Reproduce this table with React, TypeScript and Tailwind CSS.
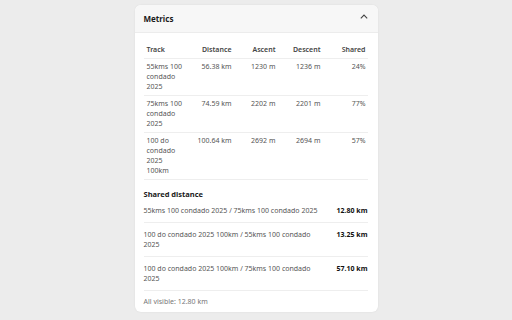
import React from "react";

const tracks = [
  { name: "55kms 100 condado 2025", dist: "56.38 km", asc: "1230 m", desc: "1236 m", shared: "24%" },
  { name: "75kms 100 condado 2025", dist: "74.59 km", asc: "2202 m", desc: "2201 m", shared: "77%" },
  { name: "100 do condado 2025 100km", dist: "100.64 km", asc: "2692 m", desc: "2694 m", shared: "57%" },
];

const pairs = [
  { label: "55kms 100 condado 2025 / 75kms 100 condado 2025", value: "12.80 km" },
  { label: "100 do condado 2025 100km / 55kms 100 condado 2025", value: "13.25 km" },
  { label: "100 do condado 2025 100km / 75kms 100 condado 2025", value: "57.10 km" },
];

const cols = "grid grid-cols-[47px_43px_44px_45px_45px]";

export default function App() {
  return (
    <div
      className="w-[512px] h-[320px] overflow-hidden bg-[#ececec] flex flex-col items-center pt-[5px]"
      style={{ fontFamily: '"Noto Sans", "Open Sans", sans-serif' }}
    >
      <div className="w-[243px] bg-white rounded-[6px] shadow-[0_0_2px_rgba(0,0,0,0.08)] overflow-hidden flex flex-col">
        <div className="h-[28px] shrink-0 bg-[#f7f7f7] border-b border-[#ececec] flex items-center justify-between pl-[9px] pr-[10px]">
          <span className="text-[8px] font-bold text-[#1a1a1a]">Metrics</span>
          <svg width="8" height="5" viewBox="0 0 8 5" className="-mt-[4px]">
            <path d="M0.8 4.3 L4 1.1 L7.2 4.3" fill="none" stroke="#444" strokeWidth="1.1" />
          </svg>
        </div>
        <div className="pl-[9px] pr-[10px] pt-[8px] pb-[5px] text-[7px] leading-[10px]">
          <div className={`${cols} border-b border-[#eeeeee] text-[#444] font-semibold`}>
            <div className="pl-[3px] pr-[7px] py-[3.5px]">Track</div>
            <div className="px-[2px] py-[3.5px] text-right">Distance</div>
            <div className="px-[2px] py-[3.5px] text-right">Ascent</div>
            <div className="px-[2px] py-[3.5px] text-right">Descent</div>
            <div className="px-[2px] py-[3.5px] text-right">Shared</div>
          </div>
          {tracks.map((t) => (
            <div key={t.name} className={`${cols} border-b border-[#eeeeee] text-[#555]`}>
              <div className="pl-[3px] pr-[7px] py-[3px]">{t.name}</div>
              <div className="px-[2px] py-[3px] text-right">{t.dist}</div>
              <div className="px-[2px] py-[3px] text-right">{t.asc}</div>
              <div className="px-[2px] py-[3px] text-right">{t.desc}</div>
              <div className="px-[2px] py-[3px] text-right">{t.shared}</div>
            </div>
          ))}
          <div className="mt-[9px] text-[7.5px] font-bold text-[#1a1a1a]">Shared distance</div>
          {pairs.map((p) => (
            <div key={p.label} className="flex justify-between gap-3 border-b border-[#eeeeee] py-[6.5px]">
              <span className="text-[#555]">{p.label}</span>
              <span className="font-bold text-[#111] whitespace-nowrap">{p.value}</span>
            </div>
          ))}
          <div className="pt-[6px] text-[#777]">All visible: 12.80 km</div>
        </div>
      </div>
    </div>
  );
}
